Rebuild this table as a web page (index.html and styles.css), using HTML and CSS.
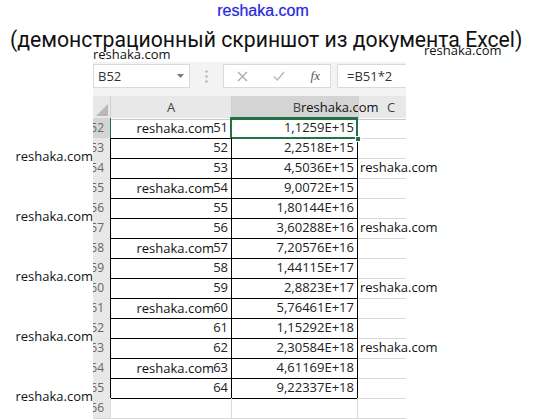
FILE: index.html
```html
<!DOCTYPE html>
<html lang="ru">
<head>
<meta charset="utf-8">
<title>Excel</title>
<link rel="stylesheet" href="styles.css">
</head>
<body>
<div class="mark-top">reshaka.com</div>
<h1 class="title">(демонстрационный скриншот из документа Excel)</h1>
<span class="wm wm-t1">reshaka.com</span>
<span class="wm wm-t2">reshaka.com</span>
<div class="excel">
  <div class="fbar">
    <div class="namebox"><span>B52</span>
      <svg class="arrow" width="7" height="4" viewBox="0 0 7 4"><path d="M0 0H7L3.5 4Z" fill="#7a7a7a"/></svg>
    </div>
    <div class="dots">
      <svg width="3" height="13" viewBox="0 0 3 13"><circle cx="1.5" cy="1.5" r="1.2" fill="#b8b8b8"/><circle cx="1.5" cy="6.5" r="1.2" fill="#b8b8b8"/><circle cx="1.5" cy="11.5" r="1.2" fill="#b8b8b8"/></svg>
    </div>
    <div class="fbtns">
      <svg width="11" height="11" viewBox="0 0 11 11"><path d="M1 1L10 10M10 1L1 10" stroke="#a9a9a9" stroke-width="1.3" fill="none"/></svg>
      <svg width="12" height="10" viewBox="0 0 12 10"><path d="M1 5.5L4.5 9L11 1" stroke="#b4b4b4" stroke-width="1.3" fill="none"/></svg>
      <span class="fx">fx</span>
    </div>
    <div class="formula">=B51*2</div>
  </div>
  <div class="sheet">
    <div class="row hdr">
      <div class="corner"><svg width="12" height="12" viewBox="0 0 12 12"><path d="M12 0V12H0Z" fill="#b9b9b9"/></svg></div>
      <div class="h">A</div>
      <div class="h hsel">B<span class="wm wm-h">reshaka.com</span></div>
      <div class="h hc">C</div>
    </div>
    <div class="row"><div class="rh rhsel"><span class="num">52</span></div><div class="c a asel">51<span class="wm wm-a">reshaka.com</span></div><div class="c b sel">1,1259E+15<i class="handle"></i></div><div class="c cc"></div></div>
    <div class="row"><div class="rh"><span class="num">53</span><span class="wm wm-l">reshaka.com</span></div><div class="c a">52</div><div class="c b">2,2518E+15</div><div class="c cc"></div></div>
    <div class="row"><div class="rh"><span class="num">54</span></div><div class="c a">53</div><div class="c b">4,5036E+15</div><div class="c cc"><span class="wm wm-r">reshaka.com</span></div></div>
    <div class="row"><div class="rh"><span class="num">55</span></div><div class="c a">54<span class="wm wm-a">reshaka.com</span></div><div class="c b">9,0072E+15</div><div class="c cc"></div></div>
    <div class="row"><div class="rh"><span class="num">56</span><span class="wm wm-l">reshaka.com</span></div><div class="c a">55</div><div class="c b">1,80144E+16</div><div class="c cc"></div></div>
    <div class="row"><div class="rh"><span class="num">57</span></div><div class="c a">56</div><div class="c b">3,60288E+16</div><div class="c cc"><span class="wm wm-r">reshaka.com</span></div></div>
    <div class="row"><div class="rh"><span class="num">58</span></div><div class="c a">57<span class="wm wm-a">reshaka.com</span></div><div class="c b">7,20576E+16</div><div class="c cc"></div></div>
    <div class="row"><div class="rh"><span class="num">59</span><span class="wm wm-l">reshaka.com</span></div><div class="c a">58</div><div class="c b">1,44115E+17</div><div class="c cc"></div></div>
    <div class="row"><div class="rh"><span class="num">60</span></div><div class="c a">59</div><div class="c b">2,8823E+17</div><div class="c cc"><span class="wm wm-r">reshaka.com</span></div></div>
    <div class="row"><div class="rh"><span class="num">61</span></div><div class="c a">60<span class="wm wm-a">reshaka.com</span></div><div class="c b">5,76461E+17</div><div class="c cc"></div></div>
    <div class="row"><div class="rh"><span class="num">62</span><span class="wm wm-l">reshaka.com</span></div><div class="c a">61</div><div class="c b">1,15292E+18</div><div class="c cc"></div></div>
    <div class="row"><div class="rh"><span class="num">63</span></div><div class="c a">62</div><div class="c b">2,30584E+18</div><div class="c cc"><span class="wm wm-r">reshaka.com</span></div></div>
    <div class="row"><div class="rh"><span class="num">64</span></div><div class="c a">63<span class="wm wm-a">reshaka.com</span></div><div class="c b">4,61169E+18</div><div class="c cc"></div></div>
    <div class="row"><div class="rh"><span class="num">65</span><span class="wm wm-l">reshaka.com</span></div><div class="c a">64</div><div class="c b">9,22337E+18</div><div class="c cc"></div></div>
    <div class="row empty"><div class="rh"><span class="num">66</span></div><div class="c a"></div><div class="c b"></div><div class="c cc"></div></div>
  </div>
</div>
</body>
</html>
```
FILE: styles.css
```css
* { box-sizing: border-box; margin: 0; padding: 0; }
html, body { width: 538px; height: 419px; overflow: hidden; background: #fff; }
body { position: relative; font-family: "Open Sans", sans-serif; color: #222; }

.mark-top {
  height: 22px;
  padding-top: 1px;
  padding-right: 12px;
  text-align: center;
  font: 16px/20px "Liberation Sans", sans-serif;
  color: #2b2bd6;
  text-shadow: 0 0 1px #9a9aff;
}
.title {
  height: 40px;
  padding-top: 3px;
  margin-left: 10px;
  font: 400 21.2px/30px Roboto, sans-serif;
  color: #111;
  white-space: nowrap;
}

.wm {
  position: absolute;
  font: 13px/18px "Open Sans", sans-serif;
  color: #111;
  white-space: nowrap;
}
.wm-t1 { left: 93px; top: 45px; }
.wm-t2 { left: 424px; top: 41px; }

.excel { margin-left: 93px; width: 313px; }

.fbar {
  height: 34px;
  background: #f3f3f3;
  display: flex;
  align-items: flex-start;
  padding-top: 2px;
}
.namebox {
  width: 97px; height: 24px;
  background: #fff;
  border: 1px solid #dadada;
  display: flex; align-items: center; justify-content: space-between;
  padding: 0 5px 0 4px;
  font-size: 13px; color: #333;
}
.dots { width: 33px; height: 24px; display: flex; align-items: center; justify-content: center; }
.fbtns {
  width: 108px; height: 24px;
  background: #fff;
  border: 1px solid #dadada;
  display: flex; align-items: center; justify-content: space-between;
  padding: 0 10px 0 13px;
}
.fx { font: italic 13px "Liberation Serif", serif; color: #555; }
.formula {
  flex: 1; height: 24px; margin-left: 6px;
  background: #fff;
  border: 1px solid #dadada; border-right: 0;
  padding-left: 9px;
  font-size: 13px; line-height: 22px; color: #333;
}

.row {
  display: grid;
  grid-template-columns: 17px 121px 127px 48px;
  height: 20px;
}
.row.hdr { height: 22px; background: #e8e8e8; }
.corner { display: flex; align-items: flex-end; justify-content: flex-end; padding: 0 2px 3px 0; border-bottom: 1px solid #c9c9c9; }
.h {
  position: relative;
  text-align: center;
  font-size: 13px; line-height: 22px; color: #444;
  border-bottom: 1px solid #c9c9c9;
  border-left: 1px solid #d0d0d0;
}
.hsel { background: #d4d4d4; border-bottom: 2px solid #217346; padding-left: 4px; }
.hc { text-align: left; padding-left: 28px; }
.wm-h { left: 69px; top: 2px; }

.rh {
  position: relative;
  background: #e8e8e8;
  border-bottom: 1px solid #d6d6d6;
}
.rhsel { background: #d4d4d4; }
.num {
  display: block;
  height: 100%;
  overflow: hidden;
  direction: rtl;
  padding-right: 6px;
  font-size: 12px; line-height: 20px; color: #666;
  white-space: nowrap;
}
.wm-l { right: 100%; top: 9px; }

.c {
  position: relative;
  font-size: 13px; line-height: 19px;
  text-align: right;
  padding-right: 3px;
  color: #222;
  white-space: nowrap;
}
.a, .b { border-bottom: 1px solid #000; border-left: 1px solid #000; }
.b { border-right: 1px solid #000; }
.asel { border-left-color: #217346; }
.cc { border-bottom: 1px solid #dadada; }
.wm-a { right: 17px; top: 1px; }
.wm-r { left: 2px; top: 0; }

.sel::after {
  content: "";
  position: absolute;
  left: -2px; top: -1px; right: -1px; bottom: -1px;
  border: 2px solid #217346;
}
.handle {
  position: absolute;
  right: -4px; bottom: -4px;
  width: 6px; height: 6px;
  background: #217346;
  border: 1px solid #fff;
  z-index: 2;
}

.empty .a, .empty .b { border-color: #dadada; }
```
